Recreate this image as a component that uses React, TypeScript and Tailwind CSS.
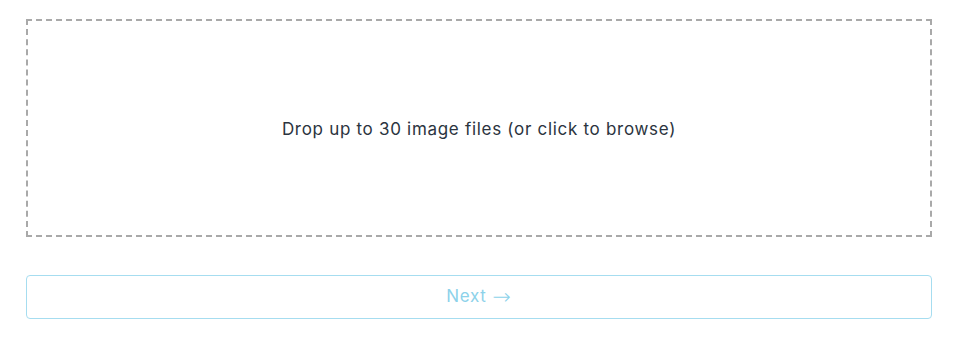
import React from 'react';

export default function App() {
  return (
    <div className="min-h-screen bg-white pl-[26px] pr-[28px] pt-[19px] font-['Inter','Liberation_Sans',sans-serif]">
      <div className="flex h-[218px] cursor-pointer items-center justify-center border-2 border-dashed border-[#a9a9a9]">
        <p className="pt-[3px] text-[17px] tracking-[0.7px] text-[#2b3440]">Drop up to 30 image files (or click to browse)</p>
      </div>
      <button
        className="mt-[38px] flex h-[44px] w-full items-center justify-center rounded-[4px] border border-[#a6ddf0] text-[17px] tracking-[0.7px] text-[#8dd2ea]"
        disabled
      >
        Next
        <span className="ml-[6px] font-['DejaVu_Sans',sans-serif] text-[22px] leading-none font-extralight">→</span>
      </button>
    </div>
  );
}
